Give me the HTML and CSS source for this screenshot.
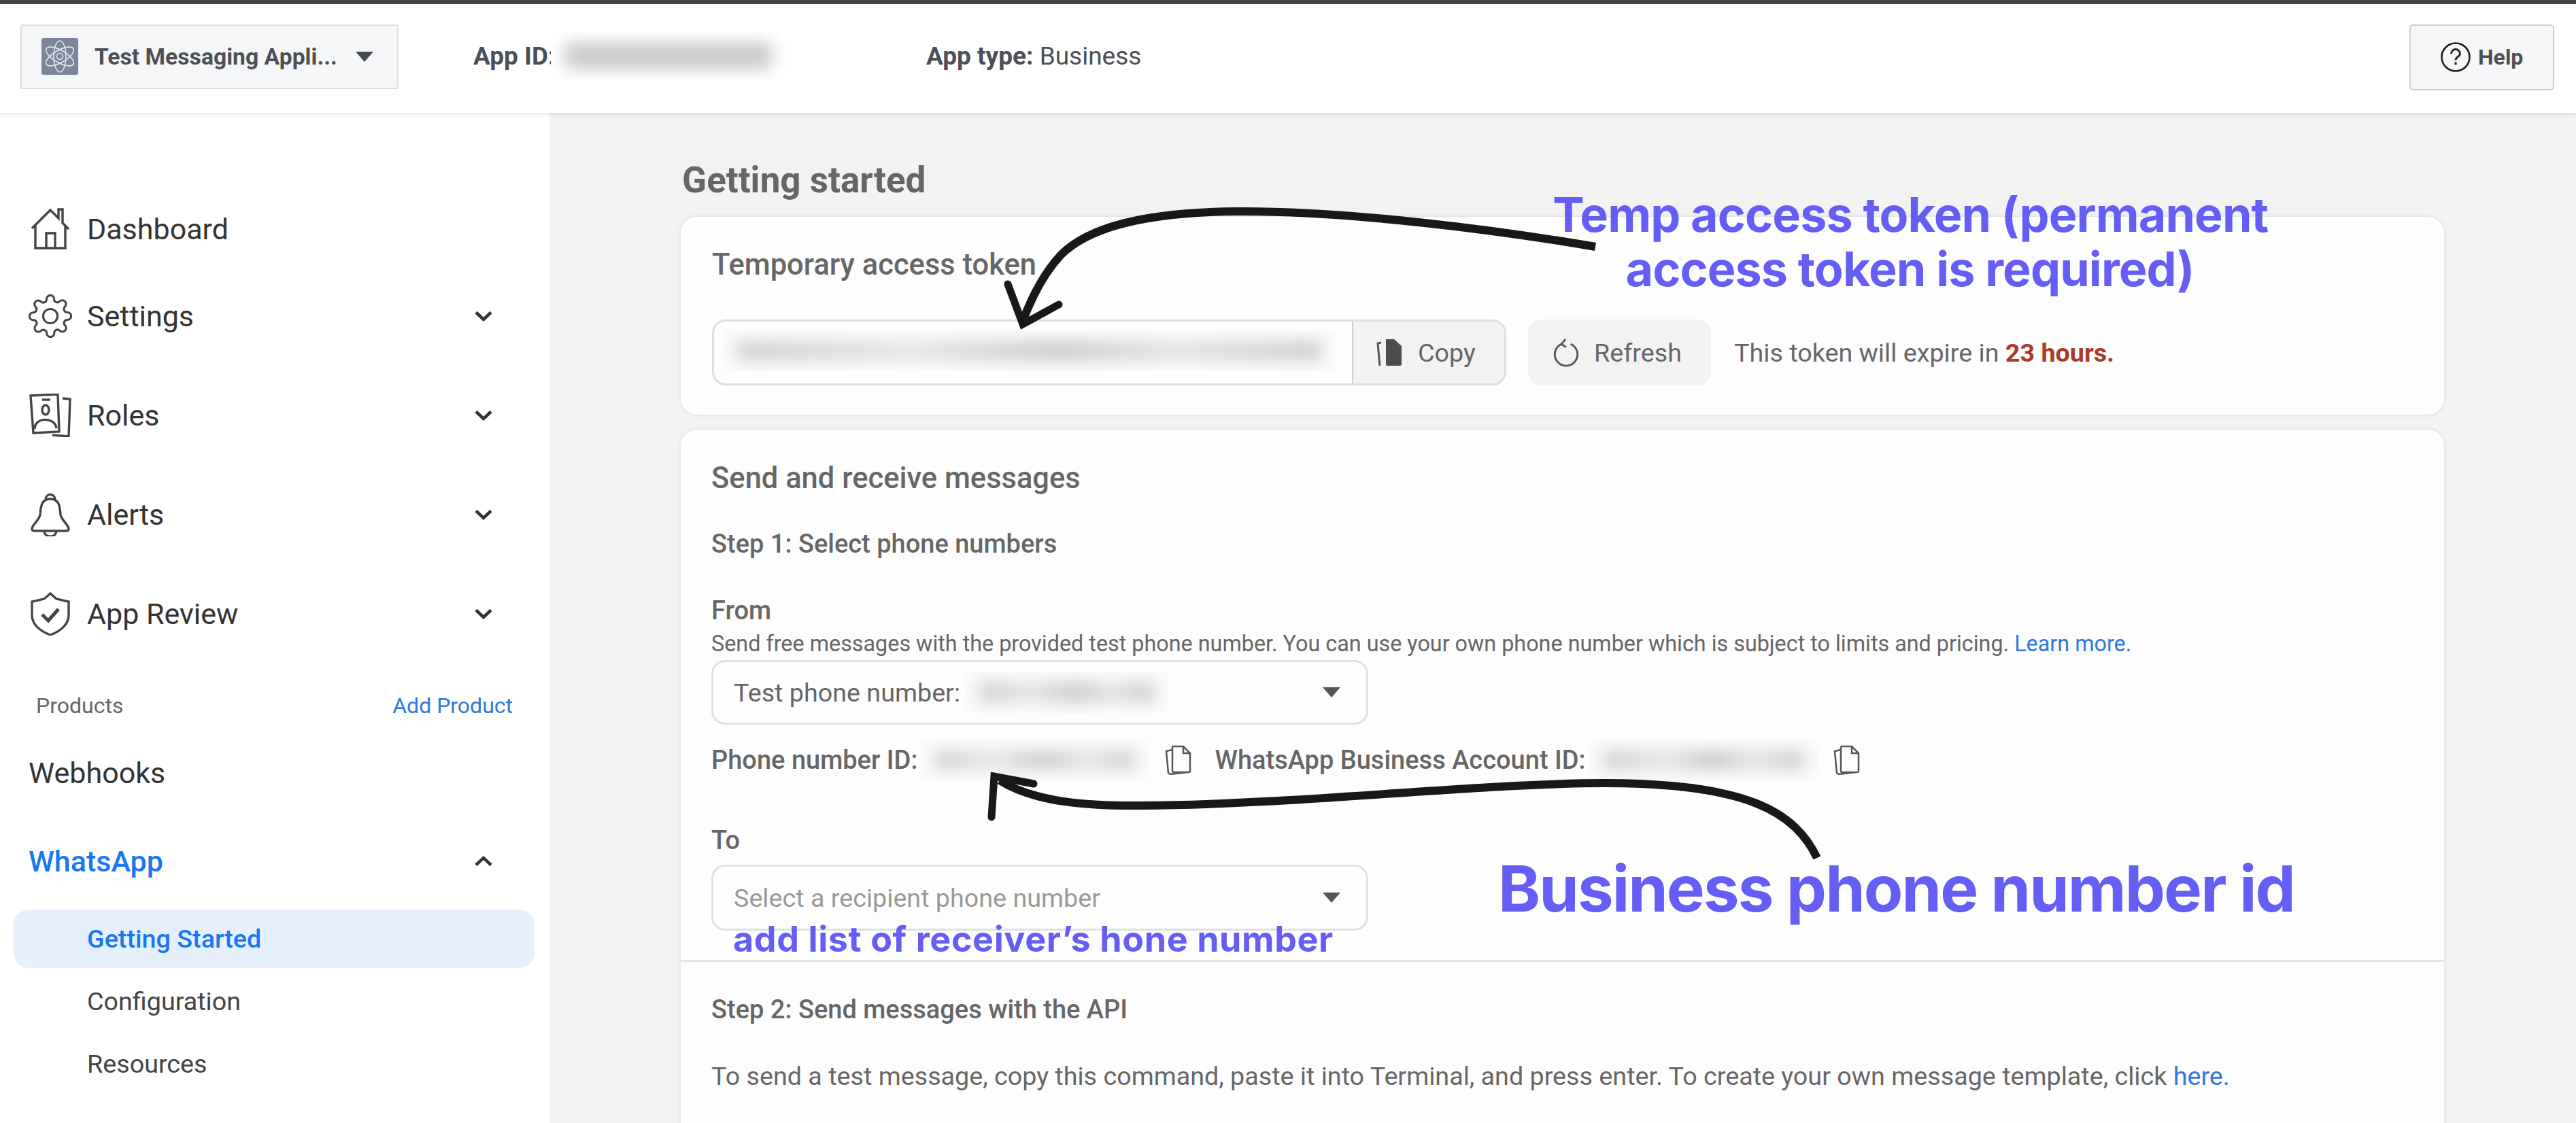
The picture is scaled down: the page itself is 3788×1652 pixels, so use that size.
FILE: index.html
```html
<!DOCTYPE html>
<html lang="en">
<head>
    <meta charset="UTF-8">
    <title>Getting started</title>
    <link rel="stylesheet" href="styles.css">
</head>
<body>
    <!-- Top bar -->
    <header class="topbar">
        <div class="app-select">
            <svg class="app-logo" viewBox="0 0 54 54">
                <rect width="54" height="54" rx="3" fill="#7b8498"/>
                <g fill="none" stroke="#e3e6eb" stroke-width="1.6">
                    <ellipse cx="27" cy="27" rx="9" ry="23"/>
                    <ellipse cx="27" cy="27" rx="9" ry="23" transform="rotate(60 27 27)"/>
                    <ellipse cx="27" cy="27" rx="9" ry="23" transform="rotate(-60 27 27)"/>
                    <circle cx="27" cy="27" r="4.5"/>
                </g>
            </svg>
            <span class="app-name">Test Messaging Appli...</span>
            <span class="caret"></span>
        </div>
        <span class="app-id">App ID:</span>
        <span class="blur blur-app"><i></i></span>
        <span class="app-type"><b>App type:</b> Business</span>
        <button class="help-btn">
            <svg class="help-icon" viewBox="0 0 44 44">
                <circle cx="22" cy="22" r="20.5" fill="none" stroke="#1c1e21" stroke-width="2.6"/>
                <path d="M15.5 17a6.5 6.5 0 0 1 13 0c0 4.500-6.500 4.500-6.500 9.500" fill="none" stroke="#1c1e21" stroke-width="2.8"/>
                <rect x="20.400" y="29.500" width="3.200" height="3.600" fill="#1c1e21"/>
            </svg>
            Help
        </button>
    </header>

    <div class="page">
        <!-- Sidebar -->
        <aside class="sidebar">
            <div class="nav-row nav-first">
                <svg class="nav-icon" viewBox="0 0 64 64"><path d="M5 31 32 4l12 12V3h6v20l9 9M10 27v33h44V27M26 60V38h13v22" /></svg>
                <span>Dashboard</span>
            </div>
            <div class="nav-row nav-settings">
                <svg class="nav-icon" viewBox="0.5 0.5 23 23"><circle cx="12" cy="12" r="3.800"/><path class="thin" d="M19.400 15a1.650 1.650 0 0 0 .33 1.820l.06.06a2 2 0 0 1 0 2.830 2 2 0 0 1-2.830 0l-.06-.06a1.650 1.650 0 0 0-1.820-.33 1.650 1.650 0 0 0-1 1.510V21a2 2 0 0 1-2 2 2 2 0 0 1-2-2v-.09A1.650 1.650 0 0 0 9 19.400a1.650 1.650 0 0 0-1.820.33l-.06.06a2 2 0 0 1-2.830 0 2 2 0 0 1 0-2.830l.06-.06a1.650 1.650 0 0 0 .33-1.820 1.650 1.650 0 0 0-1.510-1H3a2 2 0 0 1-2-2 2 2 0 0 1 2-2h.09A1.650 1.650 0 0 0 4.600 9a1.650 1.650 0 0 0-.33-1.820l-.06-.06a2 2 0 0 1 0-2.830 2 2 0 0 1 2.830 0l.06.06a1.650 1.650 0 0 0 1.820.33H9a1.650 1.650 0 0 0 1-1.510V3a2 2 0 0 1 2-2 2 2 0 0 1 2 2v.09a1.650 1.650 0 0 0 1 1.510 1.650 1.650 0 0 0 1.820-.33l.06-.06a2 2 0 0 1 2.830 0 2 2 0 0 1 0 2.830l-.06.06a1.650 1.650 0 0 0-.33 1.820V9a1.650 1.650 0 0 0 1.510 1H21a2 2 0 0 1 2 2 2 2 0 0 1-2 2h-.09a1.650 1.650 0 0 0-1.510 1z"/></svg>
                <span>Settings</span>
                <svg class="chevron" viewBox="0 0 26 16"><path d="M2 2.500 13 13 24 2.500"/></svg>
            </div>
            <div class="nav-row">
                <svg class="nav-icon" viewBox="0 0 64 64"><path d="M3 3 43 1l2 55-38 2zM50 7l11 1-2 55-24-2"/><path d="M20 9h12"/><ellipse cx="25" cy="24" rx="5" ry="7"/><path d="M9 52c0-18 30-18 32-1"/></svg>
                <span>Roles</span>
                <svg class="chevron" viewBox="0 0 26 16"><path d="M2 2.500 13 13 24 2.500"/></svg>
            </div>
            <div class="nav-row">
                <svg class="nav-icon" viewBox="0 0 64 64"><path d="M32 9C18 9 18 22 17 32c-1 8-12 15-12 21 0 2 1 3 4 3h46c3 0 4-1 4-3 0-6-11-13-12-21-1-10-1-23-15-23z"/><path d="M25 10c0-10 14-10 14 0M23 56c1 11 17 11 18 0"/></svg>
                <span>Alerts</span>
                <svg class="chevron" viewBox="0 0 26 16"><path d="M2 2.500 13 13 24 2.500"/></svg>
            </div>
            <div class="nav-row">
                <svg class="nav-icon" viewBox="0 0 64 64"><path d="M32 2 41 10l18 4v20c0 14-13 24-27 29C18 58 5 48 5 34V14l18-4z"/><path class="check" d="m20 33 9 9 15-17"/></svg>
                <span>App Review</span>
                <svg class="chevron" viewBox="0 0 26 16"><path d="M2 2.500 13 13 24 2.500"/></svg>
            </div>

            <div class="products-head">
                <span>Products</span>
                <a class="link" href="#">Add Product</a>
            </div>

            <div class="nav-row nav-plain nav-webhooks"><span>Webhooks</span></div>
            <div class="nav-row nav-plain nav-open">
                <span>WhatsApp</span>
                <svg class="chevron" viewBox="0 0 26 16"><path d="M2 13.500 13 3 24 13.500"/></svg>
            </div>
            <div class="sub-item active">Getting Started</div>
            <div class="sub-item">Configuration</div>
            <div class="sub-item">Resources</div>
        </aside>

        <!-- Main content -->
        <main class="content">
            <h1>Getting started</h1>

            <section class="card token-card">
                <h2>Temporary access token</h2>
                <div class="token-row">
                    <div class="token-field">
                        <div class="token-value"><span class="blur blur-token"><i></i></span></div>
                        <div class="token-copy">
                            <svg class="btn-icon" viewBox="0 0 40 42"><path class="fill" d="M14 1h12l11 10v27a2 2 0 0 1-2 2H16a2 2 0 0 1-2-2z"/><path class="sheet" d="M7 6 2 7l3 33"/></svg>
                            Copy
                        </div>
                    </div>
                    <button class="refresh-btn">
                        <svg class="btn-icon" viewBox="0 0 38 44"><path d="M12 8.500a17.500 17.500 0 1 0 14 0"/><path class="arrow-tip" d="M18 1 12 8.500l7 5"/></svg>
                        Refresh
                    </button>
                    <p class="expire">This token will expire in <b>23 hours.</b></p>
                </div>
            </section>

            <section class="card messages-card">
                <div class="step-one">
                    <h2>Send and receive messages</h2>
                    <h3 class="step-title">Step 1: Select phone numbers</h3>
                    <h3 class="field-label from-label">From</h3>
                    <p class="hint">Send free messages with the provided test phone number. You can use your own phone number which is subject to limits and pricing. <a class="link" href="#">Learn more.</a></p>
                    <div class="select">
                        <span>Test phone number:</span>
                        <span class="blur blur-phone"><i></i></span>
                        <span class="caret caret-select"></span>
                    </div>
                    <div class="id-row">
                        <b>Phone number ID:</b>
                        <span class="blur blur-id"><i></i></span>
                        <svg class="copy-icon" viewBox="0 0 42 44"><path d="M12 2h15l10 10v26a2 2 0 0 1-2 2H13a2 2 0 0 1-2-2V3z"/><path d="M27 2v10h10"/><path d="M11 7 2 9l3 32 3 2 24-3"/></svg>
                        <b class="waba-label">WhatsApp Business Account ID:</b>
                        <span class="blur blur-waba"><i></i></span>
                        <svg class="copy-icon" viewBox="0 0 42 44"><path d="M12 2h15l10 10v26a2 2 0 0 1-2 2H13a2 2 0 0 1-2-2V3z"/><path d="M27 2v10h10"/><path d="M11 7 2 9l3 32 3 2 24-3"/></svg>
                    </div>
                    <h3 class="field-label to-label">To</h3>
                    <div class="select select-to">
                        <span class="placeholder">Select a recipient phone number</span>
                        <span class="caret caret-select"></span>
                    </div>
                </div>
                <div class="step-two">
                    <h3 class="step-title">Step 2: Send messages with the API</h3>
                    <p class="step-text">To send a test message, copy this command, paste it into Terminal, and press enter. To create your own message template, click <a class="link" href="#">here.</a></p>
                </div>
            </section>
        </main>
    </div>

    <!-- Annotations drawn over the screenshot -->
    <svg class="arrows" viewBox="0 0 3788 1652">
        <path class="arrow-line" d="M2346 363C2200 338 1980 310 1820 311C1680 312 1600 335 1560 375C1535 402 1518 435 1504 472"/>
        <path class="arrow-head" d="M1482 418 1504 477 1557 448"/>
        <path class="arrow-line" d="M2672 1262C2640 1195 2570 1152 2360 1152C2180 1152 1900 1184 1680 1185C1600 1186 1520 1180 1470 1148"/>
        <path class="arrow-head" d="M1520 1153 1462 1142 1458 1202"/>
    </svg>
    <div class="note note-token">Temp access token (permanent<br>access token is required)</div>
    <div class="note note-phone">Business phone number id</div>
    <div class="note note-list">add list of receiver’s hone number</div>
</body>
</html>
```

FILE: styles.css
```css
/* General */
html, body {
    height: 100%;
}

body {
    margin: 0;
    overflow: hidden;
    position: relative;
    background: #f2f2f2;
    color: #333;
    font-family: Roboto, Arial, sans-serif;
}

h1, h2, h3, p {
    margin: 0;
}

.link {
    color: #2f78dc;
    text-decoration: none;
}

/* Blurred out values */
.blur {
    display: block;
    flex: none;
    overflow: hidden;
    background: #fbfbfb;
}

.blur i {
    display: block;
    height: calc(100% - 32px);
    margin: 16px 20px;
    filter: blur(12px);
    background: linear-gradient(90deg, #cdcdcd, #e2e2e2 30%, #c8c8c8 55%, #e0e0e0 75%, #cbcbcb);
}

/* Top bar */
.topbar {
    position: relative;
    z-index: 2;
    box-sizing: border-box;
    height: 166px;
    display: flex;
    align-items: center;
    padding: 0 32px 0 30px;
    background: #fff;
    border-top: 6px solid #444;
    box-shadow: 0 2px 6px rgba(0,0,0,0.12);
    color: #4b4f56;
    font-size: 37px;
}

.app-select {
    box-sizing: border-box;
    width: 556px;
    height: 95px;
    margin-top: -6px;
    display: flex;
    align-items: center;
    padding-left: 29px;
    background: #f5f6f7;
    border: 2px solid #dadde1;
    border-radius: 3px;
}

.app-logo {
    width: 54px;
    height: 54px;
    margin-right: 24px;
}

.app-name {
    font-size: 33.700px;
    font-weight: 700;
}

.caret {
    width: 0;
    height: 0;
    margin-left: 27px;
    border-left: 13px solid transparent;
    border-right: 13px solid transparent;
    border-top: 15px solid #444950;
}

.app-id {
    width: 114px;
    margin-left: 110px;
    margin-top: -8px;
    font-weight: 700;
    white-space: nowrap;
}

.blur-app {
    width: 345px;
    height: 70px;
    margin-top: -8px;
    background: #fff;
}

.blur-app i {
    background: #c6c8ca;
}

.app-type {
    margin-left: 207px;
    margin-top: -8px;
}

.help-btn {
    box-sizing: border-box;
    width: 213px;
    height: 97px;
    margin-left: auto;
    margin-top: -4px;
    display: flex;
    align-items: center;
    padding: 0 0 0 44px;
    background: #f5f6f7;
    border: 2px solid #ccd0d5;
    border-radius: 5px;
    color: #4b4f56;
    font-family: inherit;
    font-size: 32px;
    font-weight: 700;
}

.help-icon {
    width: 44px;
    height: 44px;
    margin-right: 11px;
}

/* Page layout */
.page {
    display: flex;
    height: 1486px;
    overflow: hidden;
}

.sidebar {
    box-sizing: border-box;
    flex: none;
    width: 808px;
    padding: 0 22px 0 20px;
    background: #fff;
}

.nav-row {
    height: 100px;
    margin: 46px 0 0 22px;
    display: flex;
    align-items: center;
    font-size: 43px;
    color: #333;
}

.nav-first {
    margin-top: 121px;
}

.nav-settings {
    margin-top: 28px;
}

.nav-webhooks {
    margin-top: 27px;
}

.nav-open {
    margin-top: 30px;
    color: #1877f2;
    font-weight: 500;
}

.nav-icon {
    flex: none;
    width: 64px;
    height: 64px;
    margin-right: 22px;
    fill: none;
    stroke: #444;
    stroke-width: 3.400;
}

.nav-icon .thin {
    stroke-width: 1.100;
}

.nav-settings .nav-icon circle {
    stroke-width: 1.100;
}

.nav-icon .check {
    stroke-width: 5;
}

.chevron {
    flex: none;
    width: 26px;
    height: 16px;
    margin-left: auto;
    margin-right: 62px;
    fill: none;
    stroke: #333;
    stroke-width: 4.500;
}

.products-head {
    height: 44px;
    margin: 63px 32px 0 33px;
    display: flex;
    align-items: center;
    justify-content: space-between;
    font-size: 32px;
    color: #666;
}

.sub-item {
    height: 86px;
    margin-top: 6px;
    display: flex;
    align-items: center;
    padding-left: 108px;
    border-radius: 22px;
    font-size: 37.700px;
    color: #444;
}

.sub-item.active {
    margin-top: 21px;
    background: #e6f0fc;
    color: #1877f2;
    font-weight: 500;
}

/* Main content */
.content {
    flex: 1;
    min-width: 0;
    padding: 69px 194px 0 193px;
    color: #666;
    font-size: 37.700px;
}

h1 {
    font-size: 53px;
    line-height: 60px;
    font-weight: 700;
    color: #666;
    margin-left: 2px;
}

h2 {
    font-size: 43.500px;
    line-height: 50px;
    font-weight: 500;
    color: #666;
}

.card {
    background: #fdfdfd;
    border-radius: 24px;
    box-shadow: 0 0 6px rgba(0,0,0,0.1);
}

.token-card {
    box-sizing: border-box;
    height: 291px;
    margin-top: 24px;
    padding: 46px 46px 0;
}

.token-row {
    display: flex;
    align-items: center;
    margin-top: 55px;
}

.token-field {
    box-sizing: border-box;
    width: 1168px;
    height: 97px;
    display: flex;
    border: 3px solid #dedede;
    border-radius: 20px;
    overflow: hidden;
}

.token-value {
    flex: 1;
    padding: 13px 0 0 13px;
}

.blur-token {
    width: 900px;
    height: 60px;
}

.token-copy {
    box-sizing: border-box;
    width: 224px;
    display: flex;
    align-items: center;
    padding-left: 34px;
    background: #f2f2f2;
    border-left: 2px solid #ccc;
}

.btn-icon {
    flex: none;
    width: 40px;
    height: 42px;
    margin-right: 21px;
    fill: none;
    stroke: #555;
    stroke-width: 3;
}

.btn-icon .fill {
    fill: #4d4d4d;
    stroke: none;
}

.refresh-btn {
    box-sizing: border-box;
    width: 269px;
    height: 97px;
    margin-left: 32px;
    display: flex;
    align-items: center;
    padding: 0 0 0 36px;
    background: #f2f2f2;
    border: none;
    border-radius: 20px;
    color: #666;
    font-family: inherit;
    font-size: 37.700px;
}

.expire {
    margin-left: 34px;
    color: #666;
    white-space: nowrap;
}

.expire b {
    color: #a93a2c;
    font-weight: 700;
}

.messages-card {
    margin-top: 22px;
    padding-bottom: 200px;
}

.step-one {
    padding: 47px 46px 43px 45px;
}

.step-two {
    padding: 48px 46px 0 45px;
    border-top: 3px solid #e3e3ea;
}

h3 {
    font-size: 38px;
    line-height: 44px;
    font-weight: 500;
    color: #666;
}

.step-one .step-title {
    margin-top: 49px;
}

.from-label {
    margin-top: 54px;
}

.hint {
    margin-top: 8px;
    font-size: 32.350px;
    line-height: 38px;
    white-space: nowrap;
}

.select {
    box-sizing: border-box;
    width: 966px;
    height: 95px;
    margin-top: 5px;
    display: flex;
    align-items: center;
    padding: 0 38px 0 30px;
    border: 3px solid #e0e0e0;
    border-radius: 20px;
}

.select-to {
    height: 97px;
    margin-top: 14px;
}

.placeholder {
    color: #999;
}

.caret-select {
    margin-left: auto;
    border-top-color: #555;
}

.blur-phone {
    width: 300px;
    height: 61px;
    margin-left: 7px;
}

.id-row {
    height: 60px;
    margin-top: 22px;
    display: flex;
    align-items: center;
}

.id-row b {
    font-size: 38px;
    font-weight: 500;
    white-space: nowrap;
}

.blur-id {
    width: 335px;
    height: 58px;
    margin-left: 6px;
}

.blur-waba {
    width: 335px;
    height: 60px;
    margin-left: 6px;
}

.copy-icon {
    flex: none;
    width: 42px;
    height: 44px;
    margin-left: 23px;
    fill: none;
    stroke: #555;
    stroke-width: 2.500;
}

.waba-label {
    margin-left: 31px;
}

.to-label {
    margin-top: 66px;
}

.step-text {
    margin-top: 51px;
    line-height: 50px;
    white-space: nowrap;
}

/* Annotations */
.arrows {
    position: absolute;
    left: 0;
    top: 0;
    width: 3788px;
    height: 1652px;
    z-index: 3;
    pointer-events: none;
}

.arrow-line {
    fill: none;
    stroke: #18181a;
    stroke-width: 12;
}

.arrow-head {
    fill: none;
    stroke: #18181a;
    stroke-width: 11;
    stroke-linecap: round;
}

.note {
    position: absolute;
    z-index: 4;
    color: #655df5;
    font-family: Inter, sans-serif;
    font-weight: 700;
    white-space: nowrap;
}

.note-token {
    left: 2283px;
    top: 276px;
    width: 1051px;
    font-size: 70px;
    line-height: 80px;
    letter-spacing: -0.900px;
    text-align: center;
}

.note-phone {
    left: 2203px;
    top: 1252px;
    font-size: 94px;
    line-height: 110px;
    letter-spacing: -1.900px;
}

.note-list {
    left: 1078px;
    top: 1350px;
    font-size: 52px;
    line-height: 64px;
    letter-spacing: 0.600px;
}
```
